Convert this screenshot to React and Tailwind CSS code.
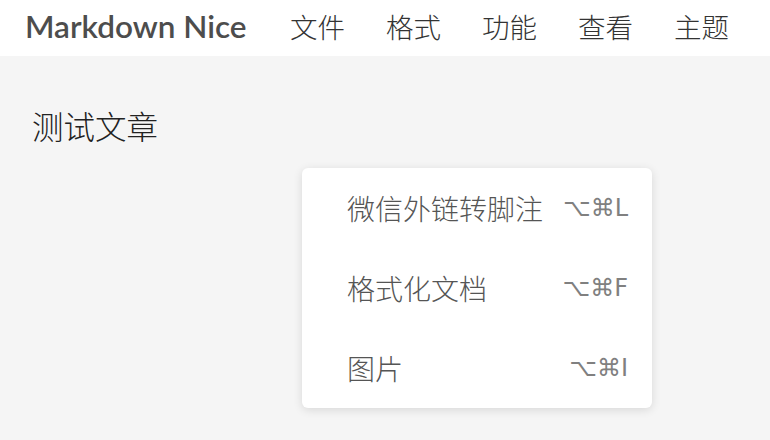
import React from 'react';

const menus = ['文件', '格式', '功能', '查看', '主题'];

const items = [
  { label: '微信外链转脚注', keys: '⌥⌘L' },
  { label: '格式化文档', keys: '⌥⌘F' },
  { label: '图片', keys: '⌥⌘I' },
];

export default function App() {
  return (
    <div
      className="w-[770px] h-[440px] bg-[#f5f5f5] overflow-hidden"
      style={{ fontFamily: '"Noto Sans CJK SC", "Noto Sans", sans-serif' }}
    >
      <header className="h-[56px] bg-white flex items-center pl-[25px] pb-[3px]">
        <div
          className="text-[31.5px] font-semibold text-[#4d4d4d] leading-none mr-[23px]"
          style={{ fontFamily: 'Lato, "Open Sans", sans-serif' }}
        >
          Markdown Nice
        </div>
        <nav className="flex">
          {menus.map((m) => (
            <span key={m} className="text-[27.5px] font-light text-[#333] leading-none px-[20.5px]">
              {m}
            </span>
          ))}
        </nav>
      </header>

      <div className="h-[112px] pl-[32px] pt-[54px]">
        <h1 className="text-[31.5px] text-[#222] leading-none font-light">测试文章</h1>
      </div>

      <div className="ml-[302px] w-[350px] bg-white rounded-[6px] shadow-[0_2px_10px_rgba(0,0,0,0.12)]">
        {items.map((it) => (
          <div key={it.label} className="h-[80px] flex items-center justify-between pl-[45px] pr-[24px]">
            <span className="text-[28px] font-light text-[#555] leading-none">{it.label}</span>
            <span
              className="text-[24px] text-[#808080] leading-none"
              style={{ fontFamily: '"DejaVu Sans", sans-serif' }}
            >
              {it.keys}
            </span>
          </div>
        ))}
      </div>
    </div>
  );
}
